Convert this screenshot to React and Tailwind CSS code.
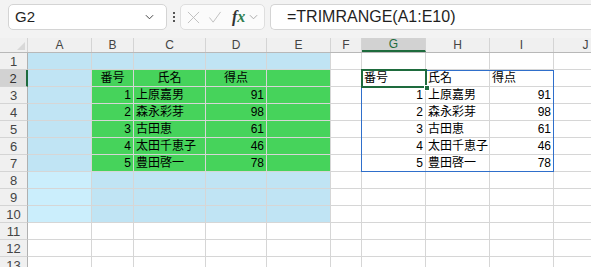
import React from "react";

const COLS = [
  { key: "A", w: "w-[64px]" },
  { key: "B", w: "w-[42px]" },
  { key: "C", w: "w-[72px]" },
  { key: "D", w: "w-[61px]" },
  { key: "E", w: "w-[64px]" },
  { key: "F", w: "w-[31px]" },
  { key: "G", w: "w-[64px]" },
  { key: "H", w: "w-[64px]" },
  { key: "I", w: "w-[64px]" },
  { key: "J", w: "w-[64px]" },
];

const people = [
  ["1", "上原嘉男", "91"],
  ["2", "森永彩芽", "98"],
  ["3", "古田恵", "61"],
  ["4", "太田千恵子", "46"],
  ["5", "豊田啓一", "78"],
];

// cell text, keyed "B2"; align: c / l / r
const cells = {
  B2: ["番号", "c"],
  C2: ["氏名", "c"],
  D2: ["得点", "c"],
  G2: ["番号", "l"],
  H2: ["氏名", "l"],
  I2: ["得点", "l"],
};
people.forEach((p, i) => {
  const r = i + 3;
  cells["B" + r] = [p[0], "r"];
  cells["C" + r] = [p[1], "l"];
  cells["D" + r] = [p[2], "r"];
  cells["G" + r] = [p[0], "r"];
  cells["H" + r] = [p[1], "l"];
  cells["I" + r] = [p[2], "r"];
});

function cellBg(col, row) {
  const ci = "ABCDE".indexOf(col);
  if (ci >= 1 && row >= 2 && row <= 7) return "bg-[#46d35b]";
  if (col === "A" && row >= 8 && row <= 10) return "bg-[#cbeefc]";
  if (ci >= 0 && row <= 10) return "bg-[#c0e4f4]";
  return "bg-white";
}

const alignCls = { c: "justify-center", l: "justify-start", r: "justify-end" };

function Chevron({ className }) {
  return (
    <svg viewBox="0 0 10 6" className={className} fill="none" stroke="currentColor" strokeWidth="1.1">
      <path d="M1 1l4 4 4-4" />
    </svg>
  );
}

function FormulaBar() {
  return (
    <div className="h-[38px] bg-[#f3f3f3] flex items-start pt-[4px] pl-[8px] gap-0">
      <div className="w-[159px] h-[26px] bg-white border border-[#d4d4d4] rounded-[5px] flex items-center pl-[6px] pr-[12px]">
        <span className="text-[15px] text-[#1f1f1f] flex-1">G2</span>
        <Chevron className="w-[9px] h-[6px] text-[#444]" />
      </div>
      <div className="w-[13px] h-[26px] flex flex-col items-center justify-center gap-[2px]">
        <span className="w-[2px] h-[2px] bg-[#555]" />
        <span className="w-[2px] h-[2px] bg-[#555]" />
        <span className="w-[2px] h-[2px] bg-[#555]" />
      </div>
      <div className="w-[85px] h-[26px] bg-[#fbfbfb] border border-[#dedede] rounded-[5px] flex items-center pl-[6px] ml-[0px]">
        <svg viewBox="0 0 14 14" className="w-[13px] h-[13px] text-[#bdbdbd]" fill="none" stroke="currentColor" strokeWidth="1">
          <path d="M1 1l12 12M13 1L1 13" />
        </svg>
        <svg viewBox="0 0 14 14" className="w-[14px] h-[13px] text-[#bdbdbd] ml-[8px]" fill="none" stroke="currentColor" strokeWidth="1">
          <path d="M1 7l4 5 8-11" />
        </svg>
        <span className="ml-[10px] text-[16px] italic font-bold text-[#333] leading-none" style={{ fontFamily: '"Liberation Serif", serif' }}>
          f<span className="text-[#2e7d4f]">x</span>
        </span>
        <Chevron className="w-[9px] h-[6px] text-[#aaa] ml-[4px]" />
      </div>
      <div className="flex-1 h-[26px] bg-white border border-r-0 border-[#d4d4d4] rounded-l-[5px] ml-[5px] flex items-center pl-[16px]">
        <span className="text-[16px] text-[#1f1f1f]">=TRIMRANGE(A1:E10)</span>
      </div>
    </div>
  );
}

function ColumnHeader() {
  return (
    <div className="flex h-[15px] bg-[#f0f0f0] border-b border-[#b8b8b8]">
      <div className="w-[28px] shrink-0 border-r border-[#d4d4d4] relative">
        <svg viewBox="0 0 8 8" className="absolute right-[2px] bottom-[2px] w-[8px] h-[8px]">
          <path d="M8 0V8H0Z" fill="#d8d8d8" />
        </svg>
      </div>
      {COLS.map((c) => {
        const sel = c.key === "G";
        return (
          <div
            key={c.key}
            className={`${c.w} shrink-0 flex items-center justify-center text-[12px] leading-none border-r border-[#d4d4d4] ${
              sel ? "bg-[#d2d2d2] text-[#1e6b3d] border-b-2 border-b-[#1e6b3d]" : "text-[#444]"
            }`}
          >
            {c.key}
          </div>
        );
      })}
    </div>
  );
}

function Row({ row }) {
  const sel = row === 2;
  return (
    <div className="flex h-[17px]">
      <div
        className={`w-[28px] shrink-0 flex items-center justify-center text-[13px] leading-none border-b border-[#d4d4d4] ${
          sel ? "bg-[#d2d2d2] text-[#333] border-r-2 border-r-[#1e6b3d]" : "bg-[#f0f0f0] text-[#444] border-r border-r-[#b0b0b0]"
        }`}
      >
        {row}
      </div>
      {COLS.map((c) => {
        const id = c.key + row;
        const content = cells[id];
        return (
          <div
            key={id}
            className={`${c.w} shrink-0 flex items-center px-[2px] border-r border-b border-[#d6d6d6] ${cellBg(c.key, row)} ${
              content ? alignCls[content[1]] : ""
            }`}
          >
            {content && (
              <span className="text-[12px] leading-none text-black whitespace-nowrap">{content[0]}</span>
            )}
          </div>
        );
      })}
    </div>
  );
}

export default function App() {
  const rows = Array.from({ length: 13 }, (_, i) => i + 1);
  return (
    <div
      className="w-[591px] h-[267px] overflow-hidden bg-white"
      style={{ fontFamily: '"Liberation Sans", "Noto Sans CJK JP", sans-serif' }}
    >
      <FormulaBar />
      <ColumnHeader />
      <div className="relative">
        {rows.map((r) => (
          <Row key={r} row={r} />
        ))}
        {/* spill range border G2:I7 */}
        <div className="absolute left-[361px] top-[17px] w-[193px] h-[102px] border border-[#2f6fcb] pointer-events-none" />
        {/* active cell G2 */}
        <div className="absolute left-[361px] top-[16px] w-[66px] h-[19px] border-2 border-[#1e6b3d] pointer-events-none" />
        <div className="absolute left-[424px] top-[32px] w-[6px] h-[6px] bg-[#1e6b3d] border border-white" />
      </div>
    </div>
  );
}
